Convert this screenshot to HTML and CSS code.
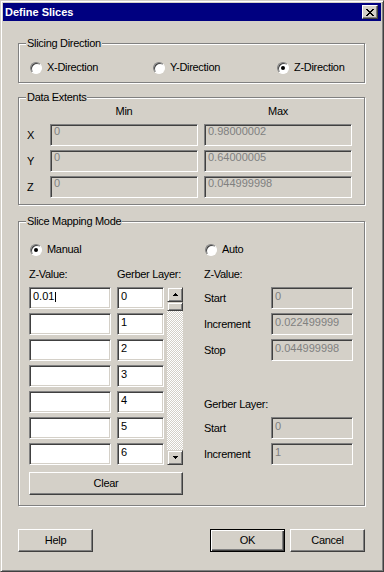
FILE: index.html
```html
<!DOCTYPE html>
<html lang="en">
<head>
    <meta charset="UTF-8">
    <meta name="viewport" content="width=device-width, initial-scale=1.0">
    <title>Define Slices</title>
    <link rel="stylesheet" href="styles.css">
</head>
<body>
    <div class="window">
        <div class="titlebar">
            <span class="title">Define Slices</span>
            <span class="close-btn">
                <svg width="8" height="7" viewBox="0 0 8 7"><path d="M0 0h2v1H0z M6 0h2v1H6z M1 1h2v1H1z M5 1h2v1H5z M2 2h4v1H2z M3 3h2v1H3z M2 4h4v1H2z M1 5h2v1H1z M5 5h2v1H5z M0 6h2v1H0z M6 6h2v1H6z" fill="#000"/></svg>
            </span>
        </div>

        <div class="dialog-body">
            <fieldset class="group">
                <legend>Slicing Direction</legend>
                <div class="direction-row">
                    <label class="radio"><span class="radio-box"></span>X-Direction</label>
                    <label class="radio"><span class="radio-box"></span>Y-Direction</label>
                    <label class="radio"><span class="radio-box checked"></span>Z-Direction</label>
                </div>
            </fieldset>

            <fieldset class="group extents">
                <legend>Data Extents</legend>
                <div class="extents-grid">
                    <span></span>
                    <span class="col-head">Min</span>
                    <span class="col-head">Max</span>

                    <span class="axis">X</span>
                    <div class="field disabled">0</div>
                    <div class="field disabled">0.98000002</div>

                    <span class="axis">Y</span>
                    <div class="field disabled">0</div>
                    <div class="field disabled">0.64000005</div>

                    <span class="axis">Z</span>
                    <div class="field disabled">0</div>
                    <div class="field disabled">0.044999998</div>
                </div>
            </fieldset>

            <fieldset class="group mapping-group">
                <legend>Slice Mapping Mode</legend>
                <div class="mapping">
                    <div class="manual-col">
                        <label class="radio mode-radio"><span class="radio-box checked"></span>Manual</label>
                        <div class="col-labels">
                            <span>Z-Value:</span>
                            <span>Gerber Layer:</span>
                        </div>
                        <div class="layer-list">
                            <div class="layer-grid">
                                <div class="field">0.01<span class="caret"></span></div><div class="field">0</div>
                                <div class="field"></div><div class="field">1</div>
                                <div class="field"></div><div class="field">2</div>
                                <div class="field"></div><div class="field">3</div>
                                <div class="field"></div><div class="field">4</div>
                                <div class="field"></div><div class="field">5</div>
                                <div class="field"></div><div class="field">6</div>
                            </div>
                            <div class="scrollbar">
                                <span class="sb-btn"><svg width="5" height="3" viewBox="0 0 5 3"><path d="M2 0h1v1h1v1h1v1H0V2h1V1h1z" fill="#000"/></svg></span>
                                <span class="sb-thumb"></span>
                                <span class="sb-track"></span>
                                <span class="sb-btn"><svg width="5" height="3" viewBox="0 0 5 3"><path d="M0 0h5v1H4v1H3v1H2V2H1V1H0z" fill="#000"/></svg></span>
                            </div>
                        </div>
                        <button class="btn clear-btn">Clear</button>
                    </div>

                    <div class="auto-col">
                        <label class="radio mode-radio"><span class="radio-box"></span>Auto</label>
                        <div class="col-label">Z-Value:</div>
                        <div class="auto-grid">
                            <span>Start</span>
                            <div class="field disabled">0</div>
                            <span>Increment</span>
                            <div class="field disabled">0.022499999</div>
                            <span>Stop</span>
                            <div class="field disabled">0.044999998</div>
                            <span class="blank-row"></span>
                            <span class="sub-head">Gerber Layer:</span>
                            <span>Start</span>
                            <div class="field disabled">0</div>
                            <span>Increment</span>
                            <div class="field disabled">1</div>
                        </div>
                    </div>
                </div>
            </fieldset>

            <div class="footer">
                <button class="btn">Help</button>
                <button class="btn default ok-btn">OK</button>
                <button class="btn">Cancel</button>
            </div>
        </div>
    </div>
</body>
</html>
```

FILE: styles.css
```css
html, body {
    margin: 0;
    padding: 0;
}
body {
    font-family: "Liberation Sans", Arial, sans-serif;
    font-size: 11px;
    line-height: 13px;
    letter-spacing: -0.3px;
    color: #000;
    background-color: #d4d0c8;
}
.window {
    width: 384px;
    height: 572px;
    box-sizing: border-box;
    border: 1px solid;
    border-color: #d4d0c8 #404040 #404040 #d4d0c8;
    box-shadow: inset 1px 1px #fff, inset -1px -1px #808080;
    padding: 2px;
    background-color: #d4d0c8;
    display: flex;
    flex-direction: column;
}

/* title bar */
.titlebar {
    height: 18px;
    flex: none;
    display: flex;
    align-items: center;
    padding: 0 3px 0 2px;
    background-color: #000080;
}
.title {
    color: #fff;
    font-weight: bold;
    letter-spacing: 0;
}
.close-btn {
    margin-left: auto;
    width: 16px;
    height: 14px;
    box-sizing: border-box;
    border: 1px solid;
    border-color: #fff #404040 #404040 #fff;
    box-shadow: inset -1px -1px #808080;
    background-color: #d4d0c8;
    display: flex;
    align-items: center;
    justify-content: center;
}

.dialog-body {
    flex: 1;
    display: flex;
    flex-direction: column;
    padding: 16px 16px 0 15px;
}

/* group boxes */
.group {
    margin: 0;
    padding: 0;
    min-width: 0;
    border: 1px solid #808080;
    box-shadow: inset 1px 1px #fff, 1px 1px #fff;
}
.group legend {
    margin-left: 7px;
    padding: 0 1px;
    line-height: 13px;
    background-color: #d4d0c8;
}
.extents {
    margin-top: 8px;
}
.mapping-group {
    margin-top: 10px;
}

/* radio buttons */
.radio {
    display: flex;
    align-items: center;
    gap: 5px;
    height: 13px;
}
.radio-box {
    width: 12px;
    height: 12px;
    flex: none;
    box-sizing: border-box;
    border: 1px solid;
    border-color: #808080 #fff #fff #808080;
    border-radius: 50%;
    box-shadow: inset 1px 1px #404040;
    background-color: #fff;
    display: grid;
    place-items: center;
}
.radio-box.checked::after {
    content: "";
    width: 4px;
    height: 4px;
    border-radius: 50%;
    background-color: #000;
}
.direction-row {
    display: grid;
    grid-template-columns: 123px 124px auto;
    padding: 11px 0 8px 11px;
}

/* edit fields */
.field {
    height: 22px;
    box-sizing: border-box;
    border: 1px solid;
    border-color: #808080 #fff #fff #808080;
    box-shadow: inset 1px 1px #404040, inset -1px -1px #d4d0c8;
    background-color: #fff;
    padding: 2px 3px 0;
    display: flex;
    align-items: flex-start;
    letter-spacing: 0;
    white-space: nowrap;
    overflow: hidden;
}
.field.disabled {
    background-color: #d4d0c8;
    color: #808080;
}
.caret {
    width: 1px;
    height: 10px;
    margin: 2px 0 0 1px;
    background-color: #000;
}

/* data extents */
.extents-grid {
    display: grid;
    grid-template-columns: 17px 148px 148px;
    grid-template-rows: 15px;
    grid-auto-rows: 22px;
    column-gap: 6px;
    row-gap: 4px;
    padding: 1px 0 6px 8px;
}
.extents-grid .field {
    padding-top: 0;
}
.col-head {
    text-align: center;
}
.axis {
    align-self: center;
}

/* slice mapping */
.mapping {
    display: grid;
    grid-template-columns: 154px 149px;
    column-gap: 21px;
    padding: 15px 0 10px 10px;
}
.manual-col,
.auto-col {
    display: flex;
    flex-direction: column;
}
.mode-radio {
    margin-left: 1px;
}
.col-labels {
    display: grid;
    grid-template-columns: 82px 47px;
    column-gap: 6px;
    margin-top: 12px;
    white-space: nowrap;
}
.col-label {
    margin-top: 12px;
}
.layer-list {
    display: flex;
    margin-top: 6px;
}
.layer-grid {
    display: grid;
    grid-template-columns: 82px 47px;
    grid-auto-rows: 22px;
    column-gap: 6px;
    row-gap: 4px;
}
.scrollbar {
    width: 16px;
    margin-left: 3px;
    display: flex;
    flex-direction: column;
}
.sb-btn,
.sb-thumb {
    box-sizing: border-box;
    border: 1px solid;
    border-color: #d4d0c8 #404040 #404040 #d4d0c8;
    box-shadow: inset 1px 1px #fff, inset -1px -1px #808080;
    background-color: #d4d0c8;
}
.sb-btn {
    height: 15px;
    display: flex;
    align-items: center;
    justify-content: center;
}
.sb-thumb {
    height: 9px;
}
.sb-track {
    flex: 1;
    background: repeating-conic-gradient(#d4d0c8 0 25%, #fff 0 50%) 0 0 / 2px 2px;
}
.auto-grid {
    display: grid;
    grid-template-columns: 67px 82px;
    grid-auto-rows: 22px;
    row-gap: 4px;
    align-items: center;
    margin-top: 6px;
    white-space: nowrap;
}
.blank-row,
.sub-head {
    grid-column: 1 / 3;
}
.sub-head {
    padding-top: 4px;
}

/* buttons */
.btn {
    width: 75px;
    height: 23px;
    box-sizing: border-box;
    padding: 0;
    border: 1px solid;
    border-color: #fff #404040 #404040 #fff;
    box-shadow: inset -1px -1px #808080;
    background-color: #d4d0c8;
    font: inherit;
    letter-spacing: inherit;
    color: #000;
    border-radius: 0;
}
.btn.default {
    border-color: #000;
    box-shadow: inset 1px 1px #fff, inset -1px -1px #404040, inset -2px -2px #808080;
}
.clear-btn {
    width: 154px;
    margin-top: 7px;
}
.footer {
    display: flex;
    gap: 5px;
    margin-top: 23px;
}
.ok-btn {
    margin-left: auto;
}
```
